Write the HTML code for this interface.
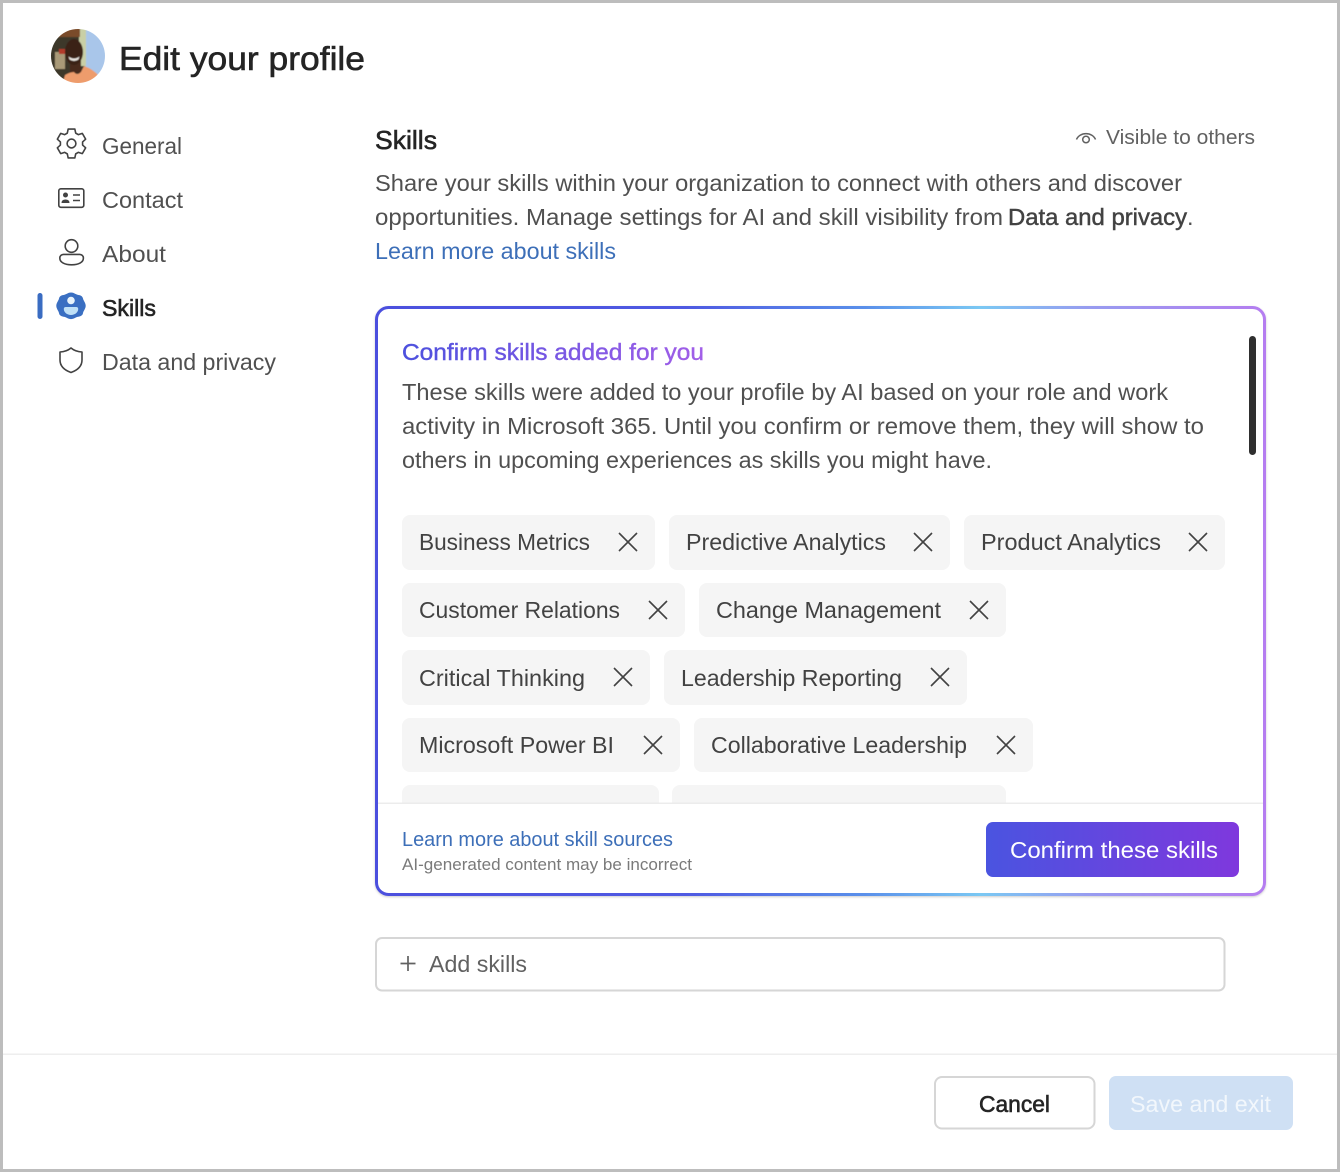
<!DOCTYPE html>
<html lang="en"><head><meta charset="utf-8"><title>Edit your profile</title>
<style>
html,body{margin:0;padding:0;background:#fff}
svg{display:block;filter:blur(.35px)}
text{font-family:"Liberation Sans",sans-serif;font-size:23.5px;fill:#505050}
.d{fill:#424242}
.s{stroke:#242424;stroke-width:.6px;fill:#242424}
.chip{fill:#f5f5f5}
.x{stroke:#424242;stroke-width:1.6;fill:none}
.ic{stroke:#424242;stroke-width:1.6;fill:none;stroke-linejoin:round}
</style></head><body>
<svg width="1340" height="1172" viewBox="0 0 1340 1172" xmlns="http://www.w3.org/2000/svg">
<defs>
<linearGradient id="bd" gradientUnits="userSpaceOnUse" x1="375" y1="0" x2="1266" y2="0"><stop offset="0" stop-color="#4c50de"/><stop offset=".35" stop-color="#4f5ae2"/><stop offset=".55" stop-color="#5a90ea"/><stop offset=".68" stop-color="#7ac8f3"/><stop offset=".8" stop-color="#979cf0"/><stop offset="1" stop-color="#b57df0"/></linearGradient>
<linearGradient id="tt" gradientUnits="userSpaceOnUse" x1="402" y1="0" x2="704" y2="0"><stop offset="0" stop-color="#4c50de"/><stop offset="1" stop-color="#a25ee8"/></linearGradient>
<linearGradient id="bt" x1="0" y1="0" x2="1" y2="0"><stop offset="0" stop-color="#4a54e0"/><stop offset="1" stop-color="#7f38dd"/></linearGradient>
<clipPath id="av"><circle cx="78" cy="56" r="27"/></clipPath>
<clipPath id="cl"><rect x="378" y="309" width="885" height="494"/></clipPath>
<filter id="b1" x="-10%" y="-10%" width="120%" height="120%"><feGaussianBlur stdDeviation=".6"/></filter>
<filter id="sh" x="-5%" y="-5%" width="110%" height="110%"><feDropShadow dx="0" dy="1" stdDeviation="1" flood-color="#000" flood-opacity=".2"/></filter>
</defs>
<rect width="1340" height="1172" fill="#fff"/>
<!-- frame -->
<rect x="1.5" y="1.5" width="1337" height="1169" fill="none" stroke="#bdbdbd" stroke-width="3"/>
<!-- avatar -->
<g clip-path="url(#av)"><g filter="url(#b1)">
<rect x="48" y="26" width="60" height="60" fill="#3e372c"/>
<rect x="85" y="26" width="23" height="60" fill="#a9c6ea"/>
<rect x="79" y="26" width="7" height="40" fill="#c9cfa6"/>
<rect x="52" y="28" width="28" height="9" fill="#7a4c2c"/>
<rect x="55" y="52" width="10" height="17" fill="#a99a78"/>
<rect x="59" y="49" width="6" height="5" fill="#b23a2c"/>
<rect x="70" y="60" width="11" height="13" fill="#4a2c1e"/>
<ellipse cx="74" cy="52" rx="9" ry="13" fill="#3a2418"/>
<path d="M68.500 56.500q5.500 4 11 0l-1 3q-4.500 3-9 0z" fill="#e8e4de"/>
<path d="M62 86l3-11q5-3 9-3 3 4 7 0l3-6q9 3 15 10l6 10z" fill="#ee9c6c"/>
</g></g>
<text x="119" y="70" textLength="246" lengthAdjust="spacingAndGlyphs" class="s" style="font-size:33px">Edit your profile</text>
<!-- nav icons -->
<g transform="translate(71.500 143.500)"><path class="ic" d="M-4.200-10.380L-3.330-14.420L3.330-14.420L4.200-10.380L6.900-8.830L10.820-10.090L14.150-4.330L11.090-1.560L11.090 1.560L14.150 4.330L10.820 10.090L6.900 8.830L4.200 10.380L3.330 14.420L-3.330 14.420L-4.200 10.380L-6.900 8.830L-10.820 10.090L-14.150 4.330L-11.090 1.560L-11.090-1.560L-14.150-4.330L-10.820-10.090L-6.900-8.830Z"/><circle r="4.400" class="ic"/></g>
<rect x="58.800" y="188.800" width="25" height="18.500" rx="2" class="ic"/>
<circle cx="65.500" cy="195" r="2.500" fill="#424242"/><path d="M61.500 203q0-3.500 4-3.500t4 3.500z" fill="#424242"/>
<path d="M73 195h7M73 200.500h7" class="ic"/>
<circle cx="71.500" cy="246" r="6.300" class="ic"/>
<path d="M59.800 258a3.600 3.600 0 0 1 3.600-3.600h16.400a3.600 3.600 0 0 1 3.600 3.600c0 4.500-5 6.800-11.800 6.800s-11.800-2.300-11.800-6.800z" class="ic"/>
<rect x="37.500" y="293" width="5" height="26" rx="2.500" fill="#3a6cc2"/>
<path d="M71 292.500c3 0 4.500 1.800 6.500 2.200 2.500.5 5 1 5.500 3.800.4 2.200 2.700 4.300 2.700 7.300s-2.300 5.100-2.700 7.300c-.5 2.800-3 3.300-5.500 3.800-2 .4-3.500 2.200-6.500 2.200s-4.500-1.800-6.500-2.200c-2.500-.5-5-1-5.500-3.800-.4-2.200-2.700-4.300-2.700-7.300s2.300-5.100 2.700-7.300c.5-2.800 3-3.300 5.500-3.800 2-.4 3.500-2.200 6.500-2.200z" fill="#3a6fc2"/>
<circle cx="71" cy="300.500" r="3.800" fill="#e8f3fb"/><path d="M63.800 309a2 2 0 0 1 2-2h10.400a2 2 0 0 1 2 2c0 3.500-3.500 6-7.200 6s-7.200-2.500-7.200-6z" fill="#bfe0f7"/>
<path d="M71 348c3 2.500 7 3.800 11 4v8c0 6-4 10-11 12.500-7-2.500-11-6.500-11-12.500v-8c4-.2 8-1.500 11-4z" class="ic"/>
<!-- nav labels -->
<text x="102" y="154" textLength="80" lengthAdjust="spacingAndGlyphs">General</text>
<text x="102" y="208" textLength="81" lengthAdjust="spacingAndGlyphs">Contact</text>
<text x="102" y="262" textLength="64" lengthAdjust="spacingAndGlyphs">About</text>
<text x="102" y="316" textLength="54" lengthAdjust="spacingAndGlyphs" class="s">Skills</text>
<text x="102" y="370" textLength="174" lengthAdjust="spacingAndGlyphs">Data and privacy</text>
<!-- header -->
<text x="375" y="149" textLength="62" lengthAdjust="spacingAndGlyphs" class="s" style="font-size:26px">Skills</text>
<path d="M1076.500 139.500a10 8.500 0 0 1 19 0" fill="none" stroke="#616161" stroke-width="1.500"/><circle cx="1086" cy="139.500" r="3.300" fill="none" stroke="#616161" stroke-width="1.500"/>
<text x="1106" y="144" textLength="149" lengthAdjust="spacingAndGlyphs" style="font-size:20.500px;fill:#616161">Visible to others</text>
<text x="375" y="191" textLength="807" lengthAdjust="spacingAndGlyphs">Share your skills within your organization to connect with others and discover</text>
<text x="375" y="225" textLength="628" lengthAdjust="spacingAndGlyphs">opportunities. Manage settings for AI and skill visibility from</text>
<text x="1008" y="225" textLength="179" lengthAdjust="spacingAndGlyphs" style="fill:#424242;stroke:#424242;stroke-width:.45px">Data and privacy</text>
<text x="1187" y="225">.</text>
<text x="375" y="259" textLength="241" lengthAdjust="spacingAndGlyphs" style="fill:#3d6fb8">Learn more about skills</text>
<!-- card -->
<rect x="376.500" y="307.500" width="888" height="587" rx="12" fill="#fff" stroke="url(#bd)" stroke-width="3" filter="url(#sh)"/>
<text x="402" y="360" textLength="302" lengthAdjust="spacingAndGlyphs" style="fill:url(#tt);stroke:url(#tt);stroke-width:.4px">Confirm skills added for you</text>
<rect x="1249" y="336" width="7" height="119" rx="3.500" fill="#2f2f2f"/>
<text x="402" y="400" textLength="766" lengthAdjust="spacingAndGlyphs">These skills were added to your profile by AI based on your role and work</text>
<text x="402" y="434" textLength="802" lengthAdjust="spacingAndGlyphs">activity in Microsoft 365. Until you confirm or remove them, they will show to</text>
<text x="402" y="468" textLength="590" lengthAdjust="spacingAndGlyphs">others in upcoming experiences as skills you might have.</text>
<!-- chips -->
<g clip-path="url(#cl)">
<rect class="chip" x="402" y="515" width="253" height="55" rx="8"/><rect class="chip" x="669" y="515" width="281" height="55" rx="8"/><rect class="chip" x="964" y="515" width="261" height="55" rx="8"/>
<rect class="chip" x="402" y="583" width="283" height="54" rx="8"/><rect class="chip" x="699" y="583" width="307" height="54" rx="8"/>
<rect class="chip" x="402" y="650" width="248" height="55" rx="8"/><rect class="chip" x="664" y="650" width="303" height="55" rx="8"/>
<rect class="chip" x="402" y="718" width="278" height="54" rx="8"/><rect class="chip" x="694" y="718" width="339" height="54" rx="8"/>
<rect class="chip" x="402" y="785" width="257" height="54" rx="8"/><rect class="chip" x="672" y="785" width="334" height="54" rx="8"/>
</g>
<text class="d" x="419" y="550" textLength="171" lengthAdjust="spacingAndGlyphs">Business Metrics</text>
<text class="d" x="686" y="550" textLength="200" lengthAdjust="spacingAndGlyphs">Predictive Analytics</text>
<text class="d" x="981" y="550" textLength="180" lengthAdjust="spacingAndGlyphs">Product Analytics</text>
<text class="d" x="419" y="618" textLength="201" lengthAdjust="spacingAndGlyphs">Customer Relations</text>
<text class="d" x="716" y="618" textLength="225" lengthAdjust="spacingAndGlyphs">Change Management</text>
<text class="d" x="419" y="686" textLength="166" lengthAdjust="spacingAndGlyphs">Critical Thinking</text>
<text class="d" x="681" y="686" textLength="221" lengthAdjust="spacingAndGlyphs">Leadership Reporting</text>
<text class="d" x="419" y="753" textLength="195" lengthAdjust="spacingAndGlyphs">Microsoft Power BI</text>
<text class="d" x="711" y="753" textLength="256" lengthAdjust="spacingAndGlyphs">Collaborative Leadership</text>
<path class="x" d="M619 533l18 18M637 533l-18 18M914 533l18 18M932 533l-18 18M1189 533l18 18M1207 533l-18 18M649 601l18 18M667 601l-18 18M970 601l18 18M988 601l-18 18M614 668l18 18M632 668l-18 18M931 668l18 18M949 668l-18 18M644 736l18 18M662 736l-18 18M997 736l18 18M1015 736l-18 18"/>
<!-- card footer -->
<rect x="378" y="802.500" width="885" height="1.500" fill="#ececec"/>
<text x="402" y="846" textLength="271" lengthAdjust="spacingAndGlyphs" style="font-size:20.500px;fill:#3d6fb8">Learn more about skill sources</text>
<text x="402" y="870" textLength="290" lengthAdjust="spacingAndGlyphs" style="font-size:17px;fill:#7a7a7a">AI-generated content may be incorrect</text>
<rect x="986" y="822" width="253" height="55" rx="7" fill="url(#bt)"/>
<text x="1010" y="858" textLength="208" lengthAdjust="spacingAndGlyphs" style="fill:#fff">Confirm these skills</text>
<!-- add skills -->
<rect x="376" y="938" width="848.500" height="52.500" rx="6" fill="#fff" stroke="#d6d6d6" stroke-width="2"/>
<path d="M408 956v15M400.500 963.500h15" stroke="#616161" stroke-width="1.700" fill="none"/>
<text x="429" y="972" textLength="98" lengthAdjust="spacingAndGlyphs" style="fill:#616161">Add skills</text>
<!-- footer -->
<rect x="3" y="1053.500" width="1334" height="1.500" fill="#eeeeee"/>
<rect x="935" y="1077" width="159.500" height="51.500" rx="7" fill="#fff" stroke="#d6d6d6" stroke-width="2"/>
<text x="979" y="1112" textLength="71" lengthAdjust="spacingAndGlyphs" class="s">Cancel</text>
<rect x="1109" y="1076" width="184" height="54" rx="7" fill="#cfe0f4"/>
<text x="1130" y="1112" textLength="141" lengthAdjust="spacingAndGlyphs" style="fill:#f2f7fc">Save and exit</text>
</svg>
</body></html>
